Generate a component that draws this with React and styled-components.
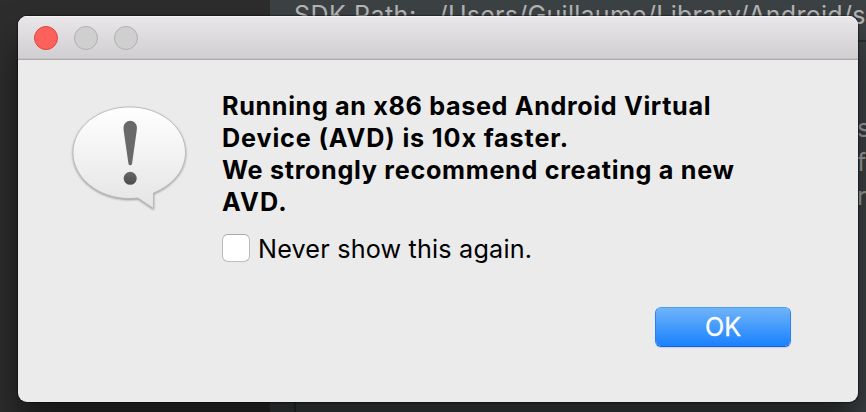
import React from "react";
import styled, { createGlobalStyle } from "styled-components";

const GlobalStyle = createGlobalStyle`
  * { box-sizing: border-box; }
  body { margin: 0; overflow: hidden; font-family: Inter, "Liberation Sans", sans-serif; }
`;

const Desktop = styled.div`
  position: relative;
  display: grid;
  grid-template-columns: 270px 1fr;
  width: 866px;
  height: 412px;
  overflow: hidden;
  background: #2b2b2b;
`;

const Sidebar = styled.div`
  background: #2d2d2d;
`;

const Editor = styled.div`
  display: flex;
  flex-direction: column;
  min-width: 0;
  overflow: hidden;
  background: #3c4143;
`;

const PathRow = styled.div`
  display: flex;
  flex: none;
  gap: 22px;
  height: 42px;
  padding-left: 24px;
  border-bottom: 2px solid #2b2d2e;
  color: #b4b4b4;
  font-size: 25px;
  line-height: 31px;
  white-space: pre;
`;

const PathLabel = styled.span`
  letter-spacing: 0.5px;
`;

const PathValue = styled.span`
  letter-spacing: 0.28px;
`;

const EditorBody = styled.div`
  display: flex;
  flex: 1;
  justify-content: flex-end;
  margin-left: 24px;
  border-left: 2px solid #2b2d2e;
`;

const SideText = styled.div`
  width: 9px;
  padding-top: 69px;
  color: #a0a2a2;
  font-size: 25px;
  line-height: 34px;
`;

const Dialog = styled.section`
  position: absolute;
  left: 18px;
  top: 16px;
  display: flex;
  flex-direction: column;
  width: 840px;
  height: 386px;
  border-radius: 9px;
  overflow: hidden;
  background: #ebebeb;
`;

const Shadow = styled.div`
  position: absolute;
  left: 18px;
  top: 16px;
  width: 840px;
  height: 386px;
  border-radius: 9px;
  box-shadow: 0 0 1px 1px rgba(0, 0, 0, 0.4), 0 26px 36px rgba(0, 0, 0, 0.5);
`;

const TitleBar = styled.header`
  display: flex;
  flex: none;
  align-items: center;
  gap: 16px;
  height: 44px;
  padding: 0 16px;
  background: linear-gradient(#e9e7ea, #d0ced1);
  border-bottom: 1px solid #adabad;
  box-shadow: inset 0 1px #f6f5f6, inset 0 -1px #c5c3c5;
`;

const Light = styled.span`
  width: 24px;
  height: 24px;
  border-radius: 50%;
  border: 1px solid ${(p) => (p.$active ? "#e0443f" : "#b1b0b1")};
  background: ${(p) => (p.$active ? "#fc615c" : "#cfcfcf")};
`;

const Content = styled.div`
  display: flex;
  flex: none;
  padding: 30px 0 0 50px;
`;

const IconSlot = styled.div`
  flex: none;
  width: 154px;
  padding-top: 9px;
`;

const Message = styled.div`
  display: flex;
  flex-direction: column;
`;

const Line = styled.div`
  height: 32px;
  color: #000;
  font-size: 25.2px;
  font-weight: 700;
  line-height: 32px;
  letter-spacing: ${(p) => p.$track}px;
  white-space: nowrap;
`;

const Option = styled.label`
  display: flex;
  align-items: center;
  gap: 8px;
  height: 32px;
  margin-top: 14px;
  color: #000;
  font-size: 25.2px;
  letter-spacing: 0.18px;
  white-space: nowrap;
`;

const OptionText = styled.span`
  padding-top: 1px;
`;

const Checkbox = styled.span`
  width: 28px;
  height: 28px;
  border: 1px solid #bcbcbc;
  border-top-color: #a9a9a9;
  border-radius: 6px;
  background: #fff;
`;

const Actions = styled.footer`
  display: flex;
  justify-content: flex-end;
  padding: 43px 67px 0 0;
`;

const OkButton = styled.button`
  width: 136px;
  height: 40px;
  padding: 0;
  border: 1px solid;
  border-color: #4f9fec #2e80f5 #1364f2;
  border-radius: 6px;
  background: linear-gradient(#6eb4f9, #1a81ff) padding-box;
  box-shadow: 0 1px 1px rgba(0, 0, 0, 0.12);
  color: #fff;
  font: 400 25.2px/38px Inter, "Liberation Sans", sans-serif;
  -webkit-text-stroke: 0.3px #fff;
`;

const BubbleSvg = styled.svg`
  display: block;
`;

const lines = [
  ["Running an x86 based Android Virtual", 0.64],
  ["Device (AVD) is 10x faster.", 0.86],
  ["We strongly recommend creating a new", 0.69],
  ["AVD.", 1.2],
];

function AlertIcon() {
  return (
    <BubbleSvg width="124" height="116" viewBox="0 0 124 116">
      <defs>
        <linearGradient id="bubble" x1="0" y1="0" x2="0" y2="1">
          <stop offset="0" stopColor="#fff" />
          <stop offset="1" stopColor="#e4e4e4" />
        </linearGradient>
        <linearGradient id="dot" x1="0" y1="0" x2="0" y2="1">
          <stop offset="0" stopColor="#686868" />
          <stop offset="1" stopColor="#4b4b4b" />
        </linearGradient>
        <filter id="soft" x="-10%" y="-10%" width="120%" height="125%">
          <feDropShadow dx="0" dy="1" stdDeviation="1.3" floodOpacity="0.4" />
        </filter>
      </defs>
      <path
        d="M61.500 8C30.500 8 5 28 5 53.500s25.500 46 56.500 46c3 0 6-.2 8.500-.5L85.500 109.500V94C105 86 117.500 71 117.500 53.500 117.500 28 92.500 8 61.500 8Z"
        fill="url(#bubble)"
        stroke="#aaa"
        strokeWidth=".7"
        filter="url(#soft)"
      />
      <path d="M55.500 28.500a6.700 6.700 0 0 1 13.400 0c0 1.500-.1 2.500-.3 4L64 65q-.4 1.300-1.800 1.300T60.500 65L55.800 32.500c-.2-1.500-.3-2.500-.3-4Z" fill="#696969" />
      <circle cx="62.200" cy="79.300" r="6.500" fill="url(#dot)" />
    </BubbleSvg>
  );
}

export default function App() {
  return (
    <Desktop>
      <GlobalStyle />
      <Sidebar />
      <Editor>
        <PathRow>
          <PathLabel>SDK Path:</PathLabel>
          <PathValue>/Users/Guillaume/Library/Android/s</PathValue>
        </PathRow>
        <EditorBody>
          <SideText>
            <div>s</div>
            <div>f</div>
            <div>r</div>
          </SideText>
        </EditorBody>
      </Editor>
      <Shadow />
      <Dialog>
        <TitleBar>
          <Light $active />
          <Light />
          <Light />
        </TitleBar>
        <Content>
          <IconSlot>
            <AlertIcon />
          </IconSlot>
          <Message>
            {lines.map(([text, track]) => (
              <Line key={text} $track={track}>{text}</Line>
            ))}
            <Option>
              <Checkbox />
              <OptionText>Never show this again.</OptionText>
            </Option>
          </Message>
        </Content>
        <Actions>
          <OkButton>OK</OkButton>
        </Actions>
      </Dialog>
    </Desktop>
  );
}
